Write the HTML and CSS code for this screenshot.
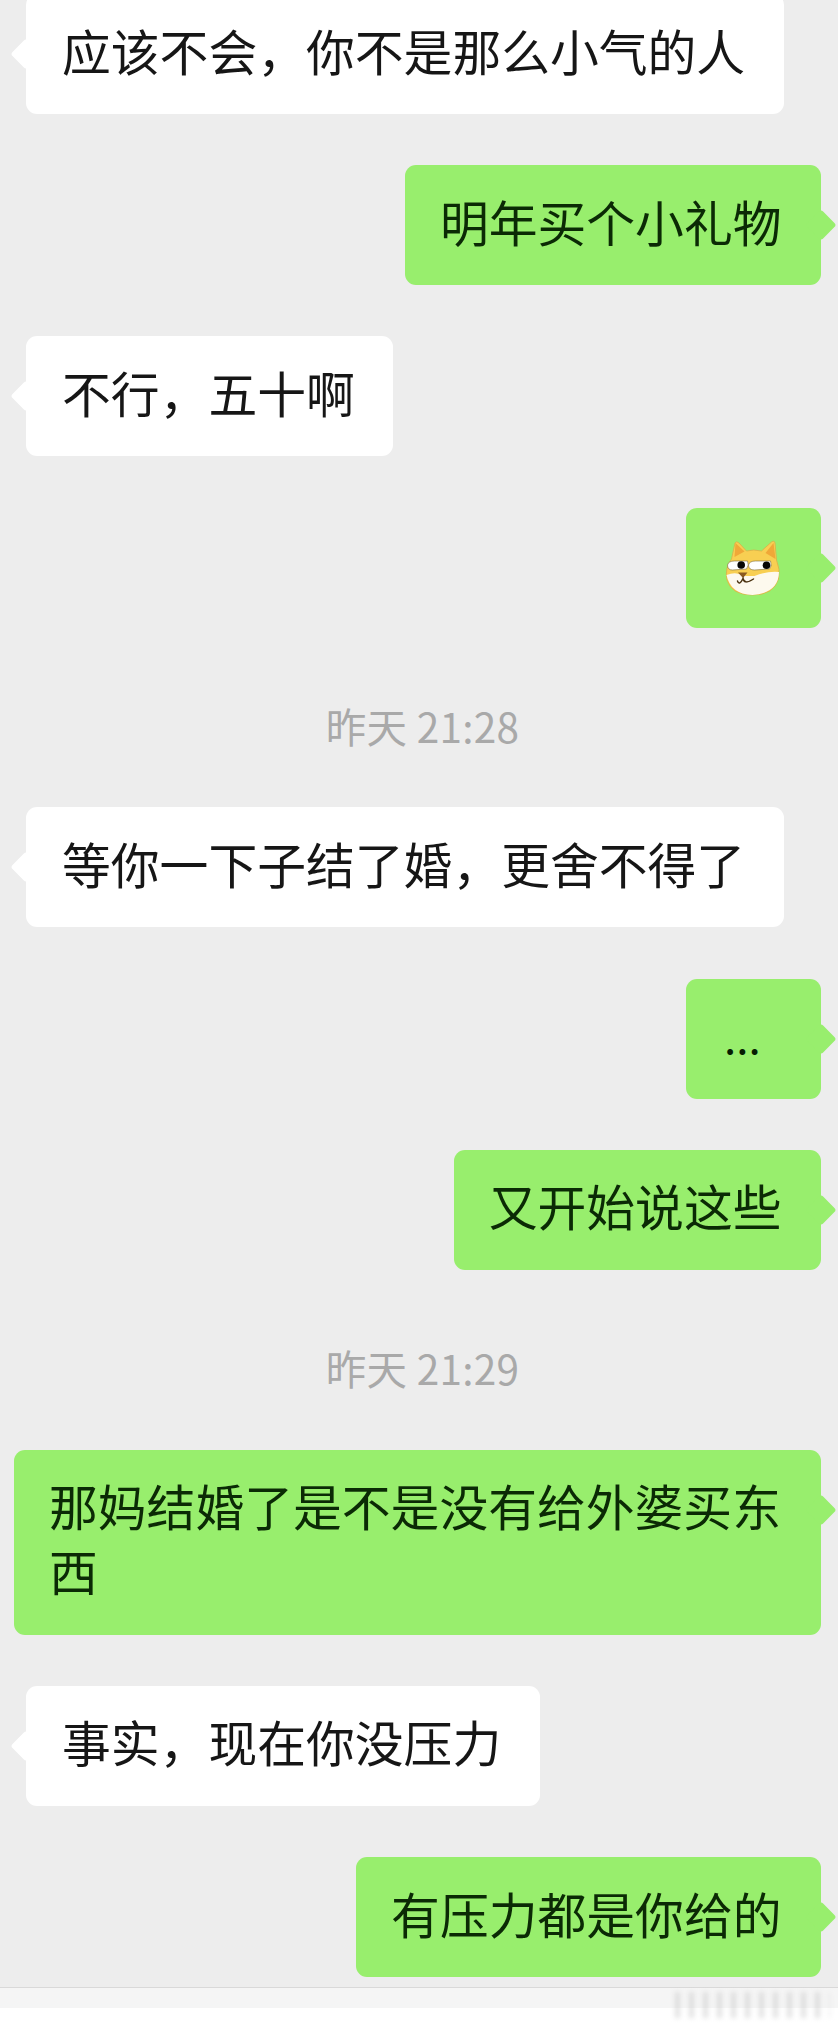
FILE: index.html
```html
<!DOCTYPE html>
<html lang="zh-CN">
	<head>
		<meta charset="UTF-8">
		<meta name="viewport" content="width=device-width, initial-scale=1.0">
		<title>chat</title>
		<link rel="stylesheet" href="styles.css">
	</head>
	<body>
		<section class="chat">
			<div class="msg left"><p class="bubble">应该不会，你不是那么小气的人</p></div>
			<div class="msg right"><p class="bubble">明年买个小礼物</p></div>
			<div class="msg left"><p class="bubble">不行，五十啊</p></div>
			<div class="msg right">
				<p class="bubble short">
					<svg class="doge" viewBox="-1.5 2 70 70" aria-label="emoji">
						<path d="M11 28 L14.5 12 Q16 9.5 18.5 12 L26 20 Q33 18 41 20 L51 11 Q54 9 54.5 12 L56 29 Q60 38 58 48 Q53 64 32 64 Q11 64 6.5 49 Q4 37 11 28Z" fill="#f8cf52" stroke="#d8b04a" stroke-width=".8"/>
						<path d="M15 12 L24 20.5 L14 26Z" fill="#f0a838"/>
						<path d="M53 12 L45 22 L55 28Z" fill="#f0a838"/>
						<path d="M6 44 Q16 40 23 45 L34 45 Q46 40 58.5 41 Q58 62 32 64 Q10 63 6 44Z" fill="#fdf9ee"/>
						<path d="M7 34 Q8 30 14 30 L27 30 Q29 34 26 38 L12 39 Q7 39 7 34Z" fill="#fff" stroke="#7a6a3a" stroke-width=".6"/>
						<path d="M28 34 Q29 30 35 30 L50 30 Q52 35 49 38 L34 39 Q28 39 28 34Z" fill="#fff" stroke="#7a6a3a" stroke-width=".6"/>
						<circle cx="20.7" cy="34" r="3.8" fill="#050505"/>
						<circle cx="46" cy="34.3" r="3.8" fill="#050505"/>
						<path d="M17.5 41.5 L27 41.5 L22.5 47Z" fill="#8a5a20"/>
						<path d="M17 50 Q19 55 22.5 47.5 Q24 54 33 48" fill="none" stroke="#4a3210" stroke-width="1.5" stroke-linecap="round"/>
					</svg>
				</p>
			</div>
			<div class="time">昨天 21:28</div>
			<div class="msg left"><p class="bubble">等你一下子结了婚，更舍不得了</p></div>
			<div class="msg right"><p class="bubble short"><span class="dots">...</span></p></div>
			<div class="msg right"><p class="bubble">又开始说这些</p></div>
			<div class="time">昨天 21:29</div>
			<div class="msg right"><p class="bubble">那妈结婚了是不是没有给外婆买东西</p></div>
			<div class="msg left"><p class="bubble">事实，现在你没压力</p></div>
			<div class="msg right"><p class="bubble">有压力都是你给的</p></div>
		</section>
		<footer class="bar">
			<div class="bar_top"></div>
			<div class="mark"></div>
		</footer>
	</body>
</html>
```

FILE: styles.css
```css
html,body{margin:0; padding:0; background:#ededed;}
body{height:2027px; overflow:hidden; font-family:"Noto Sans CJK SC","Liberation Sans",sans-serif;}

.chat{display:flex; flex-direction:column; gap:51.2px; margin-top:-6px; padding:0 17px 0 0;}
.msg{display:flex;}
.msg.left{padding-left:26px;}
.msg.right{justify-content:flex-end;}

.bubble{
    position:relative; box-sizing:border-box; max-width:807px; margin:0;
    font-size:48.8px; line-height:65px; border-radius:11px;
}
.bubble::after{
    content:""; position:absolute; top:49px; width:22px; height:22px;
    transform:rotate(45deg); border-radius:3px;
}
.left .bubble{padding:22.5px 38.5px 32.5px 36px; background:#fff; color:#161616;}
.left .bubble::after{left:-11px; background:#fff;}
.right .bubble{padding:22.5px 39.5px 32.5px 35px; background:#98ee6d; color:#0b2a05;}
.right .bubble::after{right:-11px; background:#98ee6d;}

.right .short{width:135px; height:120px; padding:0; display:flex; align-items:center; justify-content:center;}
.doge{width:70px; height:70px; display:block;}
.dots{
    align-self:flex-start; width:135px; padding:24px 0 0 38px; box-sizing:border-box;
    font-size:44px; line-height:65px; color:#061d02;
}

.time{
    margin-top:19px; margin-bottom:2.5px; padding-left:24px; height:56px; line-height:56px; text-align:center;
    font-size:40.5px; letter-spacing:.3px; color:#a9a9a9;
}

.bar{position:relative; margin-top:10px; height:40px; background:#fff;}
.bar_top{height:20px; background:#f5f5f5; border-top:1px solid #d9d9d9;}
.mark{
    position:absolute; top:5px; left:675px; width:155px; height:26px; filter:blur(2.5px); opacity:.5;
    background:repeating-linear-gradient(90deg,#c4c4c4 0 5px,transparent 5px 14px);
}
```
